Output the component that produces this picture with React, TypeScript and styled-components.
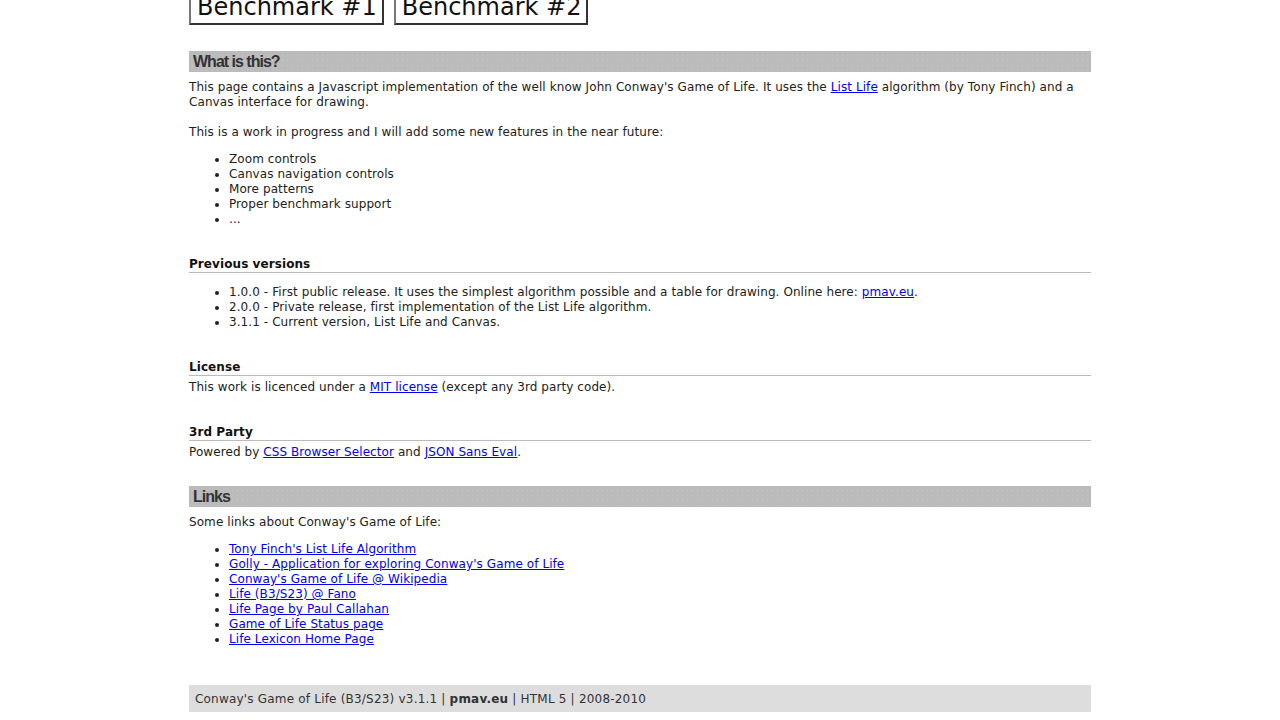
import styled, {createGlobalStyle} from 'styled-components';

const GlobalStyle = createGlobalStyle`
  body {
    margin: 0;
    background: #fff;
    color: #222;
    font-family: 'DejaVu Sans', Verdana, sans-serif;
    font-size: 12px;
    line-height: 15px;
    letter-spacing: 0.08px;
  }
  a {
    color: #00e;
  }
`;

const Page = styled.div`
  width: 902px;
  margin: 0 auto;
`;

const ButtonRow = styled.div`
  display: flex;
  gap: 10px;
  margin-top: -9px;
`;

const BenchButton = styled.button`
  font-family: 'DejaVu Sans', Verdana, sans-serif;
  font-size: 24px;
  line-height: 28px;
  letter-spacing: 0;
  padding: 0 5px 2px 6px;
  background: #fff;
  color: #111;
  border: 2px solid;
  border-color: #777 #333 #333 #777;
  cursor: pointer;
`;

// grey section bar with a faint dotted texture
const SectionTitle = styled.h2`
  margin: 26px 0 8px;
  padding-left: 4px;
  height: 21px;
  line-height: 21px;
  background-color: #bbb;
  background-image: radial-gradient(#c6c6c6 0.6px, transparent 0.8px);
  background-size: 5px 5px;
  background-position: 1px 2px;
  font-family: 'Liberation Sans', Arial, sans-serif;
  font-size: 16px;
  font-weight: bold;
  letter-spacing: -1px;
  color: #333;
`;

const SubTitle = styled.h3`
  margin: 30px 0 4px;
  font-size: 12px;
  line-height: 15px;
  color: #111;
  border-bottom: 1px solid #bbb;
`;

const Text = styled.p`
  margin: 0 0 12px;
`;

const List = styled.ul`
  margin: 12px 0;
  padding-left: 40px;
`;

const Footer = styled.div`
  margin-top: 38px;
  height: 27px;
  line-height: 28px;
  padding: 0 6px;
  background: #ddd;
  color: #333;
  letter-spacing: 0.2px;
`;

const plans = [
  'Zoom controls',
  'Canvas navigation controls',
  'More patterns',
  'Proper benchmark support',
  '...',
];

const links = [
  "Tony Finch's List Life Algorithm",
  "Golly - Application for exploring Conway's Game of Life",
  "Conway's Game of Life @ Wikipedia",
  'Life (B3/S23) @ Fano',
  'Life Page by Paul Callahan',
  'Game of Life Status page',
  'Life Lexicon Home Page',
];

export default function App() {
  return (
    <Page>
      <GlobalStyle />
      <ButtonRow>
        <BenchButton>Benchmark #1</BenchButton>
        <BenchButton>Benchmark #2</BenchButton>
      </ButtonRow>

      <SectionTitle>What is this?</SectionTitle>
      <Text>
        This page contains a Javascript implementation of the well know John Conway's Game of
        Life. It uses the <a href="#">List Life</a> algorithm (by Tony Finch) and a Canvas
        interface for drawing.
        <br />
        <br />
        This is a work in progress and I will add some new features in the near future:
      </Text>
      <List>
        {plans.map(p => (
          <li key={p}>{p}</li>
        ))}
      </List>

      <SubTitle>Previous versions</SubTitle>
      <List>
        <li>
          1.0.0 - First public release. It uses the simplest algorithm possible and a table for
          drawing. Online here: <a href="#">pmav.eu</a>.
        </li>
        <li>2.0.0 - Private release, first implementation of the List Life algorithm.</li>
        <li>3.1.1 - Current version, List Life and Canvas.</li>
      </List>

      <SubTitle>License</SubTitle>
      <Text>
        This work is licenced under a <a href="#">MIT license</a> (except any 3rd party code).
      </Text>

      <SubTitle>3rd Party</SubTitle>
      <Text>
        Powered by <a href="#">CSS Browser Selector</a> and <a href="#">JSON Sans Eval</a>.
      </Text>

      <SectionTitle>Links</SectionTitle>
      <Text>Some links about Conway's Game of Life:</Text>
      <List>
        {links.map(l => (
          <li key={l}>
            <a href="#">{l}</a>
          </li>
        ))}
      </List>

      <Footer>
        Conway's Game of Life (B3/S23) v3.1.1 | <b>pmav.eu</b> | HTML 5 | 2008-2010
      </Footer>
    </Page>
  );
}
